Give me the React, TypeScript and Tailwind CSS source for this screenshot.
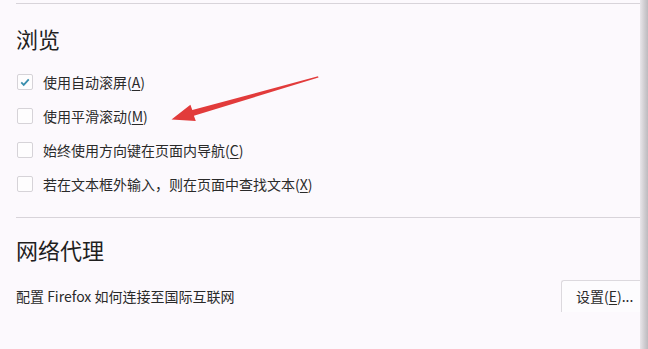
import React from "react";

const font = { fontFamily: '"Noto Sans CJK SC", "Noto Sans", sans-serif' };

function Key({ k }: { k: string }) {
  return (
    <>
      (<span className="underline underline-offset-2">{k}</span>)
    </>
  );
}

function CheckRow({ checked, label, k }: { checked?: boolean; label: string; k: string }) {
  return (
    <div className="flex h-[34px] items-center">
      <div className="ml-px flex h-4 w-4 items-center justify-center rounded-[2px] border border-[#d6d3d8] bg-[#fefdfe]">
        {checked && (
          <svg viewBox="0 0 16 16" className="h-[12px] w-[12px]">
            <path d="M3 8.5 L6.3 11.8 L13 4.5" fill="none" stroke="#3a8fae" strokeWidth="2.4" />
          </svg>
        )}
      </div>
      <span className="ml-[10px] text-[14px] text-[#2a2a2a]">
        {label}
        <Key k={k} />
      </span>
    </div>
  );
}

export default function App() {
  return (
    <div className="relative flex h-[349px] w-[648px] overflow-hidden bg-[#fcf9fd]" style={font}>
      <div className="flex-1 pl-4 pt-[3px]">
        <div className="border-t border-[#d8d4da]" />
        <h2 className="mt-[19px] h-[30px] text-[22px] leading-[30px] text-[#1f1f1f]">浏览</h2>
        <div className="mt-[12px]">
          <CheckRow checked label="使用自动滚屏" k="A" />
          <CheckRow label="使用平滑滚动" k="M" />
          <CheckRow label="始终使用方向键在页面内导航" k="C" />
          <CheckRow label="若在文本框外输入，则在页面中查找文本" k="X" />
        </div>
        <div className="mt-[16px] border-t border-[#d8d4da]" />
        <h2 className="mt-[16px] h-[30px] text-[22px] leading-[30px] text-[#1f1f1f]">网络代理</h2>
        <div className="mt-[16px] flex h-[32px] items-center justify-between">
          <span className="text-[14px] text-[#2a2a2a]">配置 Firefox 如何连接至国际互联网</span>
          <div className="-mr-2 flex h-[32px] w-[87px] items-center rounded-tl-[3px] border border-b-0 border-r-0 border-[#dcd9de] bg-[#fdfcfe] pl-[14px] text-[14px] text-[#2a2a2a]">
            设置<Key k="E" />...
          </div>
        </div>
      </div>
      <div className="w-[8px] bg-gradient-to-r from-[#e9e6ea] via-[#d2cfd3] to-[#bdbabe]" />
      <svg className="pointer-events-none absolute left-0 top-0" width="648" height="349">
        <polygon
          points="318,76.3 192.3,110 190.4,104.8 171.5,119.5 195.8,121 193.9,115.8 318.5,77.6"
          fill="#e23b3b"
        />
      </svg>
    </div>
  );
}
